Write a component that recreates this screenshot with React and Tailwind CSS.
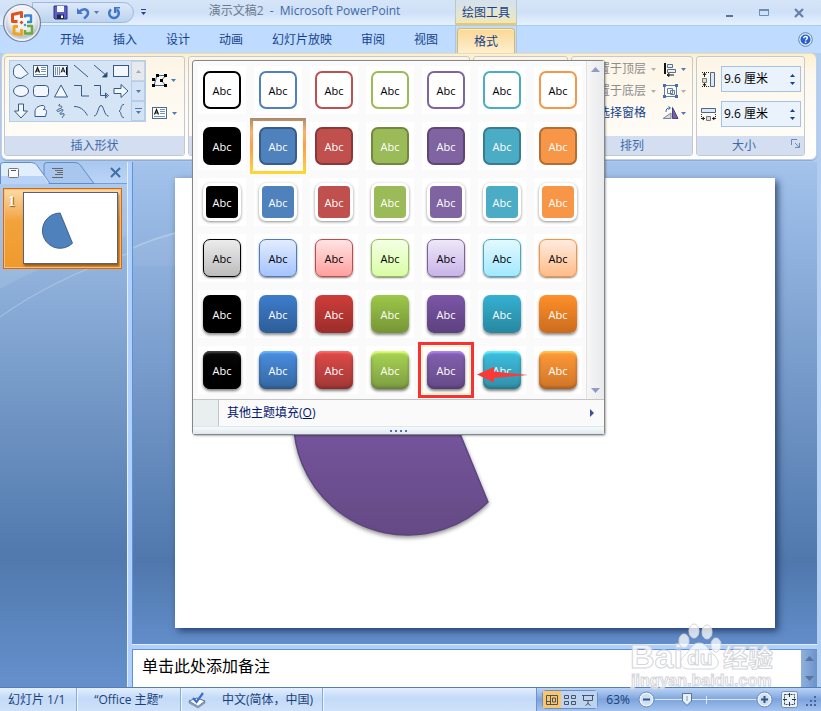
import React from 'react';
import clsx from 'clsx';

const TABS = ['开始', '插入', '设计', '动画', '幻灯片放映', '审阅', '视图'];

// One entry per gallery row; cells run black, blue, red, green, purple, teal, orange
const STYLE_ROWS = [
  {
    name: '彩色轮廓',
    base: 'border-2 bg-white text-black',
    cells: [
      'border-black', 'border-[#4f81bd]', 'border-[#c0504d]', 'border-[#9bbb59]',
      'border-[#8064a2]', 'border-[#4bacc6]', 'border-[#f79646]',
    ],
  },
  {
    name: '彩色填充',
    base: 'border-2 text-white',
    cells: [
      'border-black bg-black', 'border-[#385d8a] bg-[#4f81bd]', 'border-[#8c3836] bg-[#c0504d]',
      'border-[#71893f] bg-[#9bbb59]', 'border-[#5c4776] bg-[#8064a2]',
      'border-[#357d91] bg-[#4bacc6]', 'border-[#b66d31] bg-[#f79646]',
    ],
  },
  {
    name: '浅色轮廓',
    base: 'border-3 border-white text-white shadow-[0_1px_3px_rgba(0,0,0,0.45)]',
    cells: [
      'bg-black', 'bg-[#4f81bd]', 'bg-[#c0504d]', 'bg-[#9bbb59]',
      'bg-[#8064a2]', 'bg-[#4bacc6]', 'bg-[#f79646]',
    ],
  },
  {
    name: '细微效果',
    base: 'border bg-linear-to-b text-black shadow-[0_1px_2px_rgba(0,0,0,0.5)]',
    cells: [
      'border-black from-[#ececec] to-[#bcbcbc]', 'border-[#4a7ebb] from-[#e3ecff] to-[#a4c3ff]',
      'border-[#be4b48] from-[#ffe4e4] to-[#ffa09e]', 'border-[#98b954] from-[#f4ffe4] to-[#d9fda4]',
      'border-[#7d60a0] from-[#eee8f8] to-[#c8b3e8]', 'border-[#46aac5] from-[#e2f9ff] to-[#a0e9ff]',
      'border-[#f69240] from-[#ffebde] to-[#ffbc88]',
    ],
  },
  {
    name: '中等效果',
    base: 'bg-linear-to-b text-white shadow-[0_2px_3px_rgba(0,0,0,0.45)]',
    cells: [
      'from-black to-black', 'from-[#3e7dcd] to-[#2d5d98]', 'from-[#ce3d3a] to-[#9b2d2a]',
      'from-[#9dc849] to-[#769535]', 'from-[#7c56a8] to-[#5d417e]',
      'from-[#35b1d1] to-[#2787a0]', 'from-[#ff8f2a] to-[#cb6c1d]',
    ],
  },
  {
    name: '强烈效果',
    base: 'bg-linear-to-b text-white',
    cells: [
      'from-[#0a0a0a] to-black shadow-[inset_0_3px_2px_-1px_#444,inset_0_-2px_3px_#000,0_2px_3px_rgba(0,0,0,0.5)]',
      'from-[#4a8ee2] to-[#35679f] shadow-[inset_0_3px_2px_-1px_#6bb4ff,inset_0_-2px_3px_#2c5585,0_2px_3px_rgba(0,0,0,0.5)]',
      'from-[#e04a48] to-[#a03836] shadow-[inset_0_3px_2px_-1px_#ff6b68,inset_0_-2px_3px_#852c2a,0_2px_3px_rgba(0,0,0,0.5)]',
      'from-[#a9d552] to-[#7d9c42] shadow-[inset_0_3px_2px_-1px_#e2ff78,inset_0_-2px_3px_#657f32,0_2px_3px_rgba(0,0,0,0.5)]',
      'from-[#8460b2] to-[#654a86] shadow-[inset_0_3px_2px_-1px_#b585f2,inset_0_-2px_3px_#523a6e,0_2px_3px_rgba(0,0,0,0.5)]',
      'from-[#3dbfe0] to-[#318fa8] shadow-[inset_0_3px_2px_-1px_#62f2ff,inset_0_-2px_3px_#247488,0_2px_3px_rgba(0,0,0,0.5)]',
      'from-[#ff9a38] to-[#cf7528] shadow-[inset_0_3px_2px_-1px_#ffc84a,inset_0_-2px_3px_#a85c1c,0_2px_3px_rgba(0,0,0,0.5)]',
    ],
  },
];

const THEME_COLORS = ['黑色', '蓝色', '红色', '绿色', '紫色', '青色', '橙色'];

/* ── Small drawings ─────────────────────────────────────────────────────── */

const Caret = ({ className = 'fill-[#4b7ab5]' }) => (
  <svg width="5" height="3" viewBox="0 0 5 3" className={clsx('shrink-0', className)}>
    <path d="M0 0h5L2.5 3z" />
  </svg>
);

const TextBoxIcon = () => (
  <svg width="16" height="16" viewBox="0 0 16 16" fill="none">
    <rect x="0.5" y="2.5" width="14" height="11" fill="#fff" stroke="#4e6a8c" />
    <path d="M2.5 9.5 4.5 4.5l2 5M3.3 8h2.6" stroke="#111" strokeWidth="1.2" />
    <path d="M8 4.5h5M8 6.5h5M8 8.5h5M2 11.5h11" stroke="#6f94c6" />
  </svg>
);

const SHAPES = [
  ['饼形', <path d="M7 1.500C3 1.500 .5 4 .5 8a6.300 6.300 0 0 0 11 5.200c1-1 3-1.200 3.500-2.700z" />],
  ['文本框', null],
  ['竖排文本框', (
    <g>
      <rect x="0.5" y="2.5" width="14" height="11" />
      <path d="M2.500 4v8M4.500 4v8M6.500 4v8" stroke="#7d93b0" />
      <path d="m8 9.500 2-5 2 5M9 8h2.500M13.500 4v8" stroke="#111" fill="none" />
    </g>
  )],
  ['直线', <path d="M1 2 15 14" fill="none" />],
  ['箭头', <path d="M1 2 14 13M14 9.500V14H9.500z" fill="#1f3557" />],
  ['矩形', <rect x="0.5" y="2.5" width="15" height="11" />],
  ['椭圆', <ellipse cx="8" cy="8" rx="7.5" ry="5.5" />],
  ['圆角矩形', <rect x="0.5" y="2.5" width="15" height="11" rx="3" />],
  ['三角形', <path d="M8 2 14.500 14h-13z" />],
  ['肘形连接符', <path d="M1 2.500h7.500v10.500H16" fill="none" />],
  ['肘形箭头', <path d="M1 2.500h6.500v10H14M12.500 10l3 2.500-3 2.500z" fill="none" />],
  ['右箭头', <path d="M1 5.500h7V1.500L15 8l-7 6.500v-4H1z" />],
  ['下箭头', <path d="M5.500 1h5v7h4L8 15 1.500 8h4z" />],
  ['任意多边形', <path d="M2 13.500V9C2 5 5 3 9 2.500c4-.5 3 4 1 4 2 0 4 0 3.500 3l-1 4z" />],
  ['自由曲线', <path d="M7 1C3 4 9 2 9 4s-6 2-5 4 6-3 6-1-4 3-3 4 5-2 4 1-3 1-1 3" fill="none" />],
  ['弧形', <path d="M1 3.500c6 0 10 3 13.500 9" fill="none" />],
  ['曲线', <path d="M1 13C5 13 5 2.500 8 2.500s3 10.500 7.500 10.500" fill="none" />],
  ['左大括号', <path d="M11 1.500C7 1.500 9 7 6 8c3 1 1 6.500 5 6.500" fill="none" />],
];

const OfficeLogo = () => (
  <svg width="44" height="44" viewBox="0 0 44 44">
    <defs>
      <radialGradient id="orb" cx="50%" cy="35%" r="65%">
        <stop offset="0" stopColor="#fff" />
        <stop offset="0.55" stopColor="#e9edf3" />
        <stop offset="0.8" stopColor="#b9c2d0" />
        <stop offset="1" stopColor="#f5f8fc" />
      </radialGradient>
    </defs>
    <circle cx="22" cy="23" r="18.500" fill="url(#orb)" stroke="#76859c" strokeWidth="1.200" />
    <circle cx="22" cy="23" r="17" fill="none" stroke="#fff" opacity="0.8" />
    <g fill="none" strokeWidth="3" strokeLinejoin="round">
      <path d="M17.500 21.500H12.500v-7l9-2v5.500" stroke="#e3511b" />
      <path d="M25 17.500v-2h6v6.500h-4" stroke="#3c86cf" strokeWidth="2.400" />
      <path d="M18 26.500h-4v7l7.500 1V29" stroke="#f0a51c" />
      <path d="M27 26h5v7.500h-7V30" stroke="#6aac35" strokeWidth="2.400" />
    </g>
    <path d="m21.500 20.500 2 2-2 2-2-2z" fill="#e3511b" />
    <path d="m25 23.500 1.500 1.500-1.500 1.500-1.500-1.500z" fill="#3c86cf" />
  </svg>
);

/* Chord shape on the slide, used both on the canvas and in the thumbnail */
const ChordShape = ({ fill, stroke, id, shadow }) => (
  <svg viewBox="0 0 600 450" className="block w-full">
    <defs>
      <linearGradient id={id} x1="0" y1="0" x2="0" y2="1">
        <stop offset="0" stopColor={fill[0]} />
        <stop offset="1" stopColor={fill[1]} />
      </linearGradient>
    </defs>
    <path
      d="M233 129A114 114 0 1 0 313 324Z"
      fill={`url(#${id})`}
      stroke={stroke}
      strokeWidth={shadow ? 1.5 : 6}
      className={shadow ? 'drop-shadow-[0_2px_2px_rgba(0,0,0,0.45)]' : undefined}
    />
  </svg>
);

/* ── Title bar and tabs ─────────────────────────────────────────────────── */

const TitleBar = () => (
  <header className="flex h-[26px] border-b border-[#a5cdee] bg-linear-to-b from-[#d6e5f8] via-[#cfe0f7] to-[#e6f1ff] pl-8">
    <div className="flex w-[122px] items-center">
      <div className="flex h-[21px] items-center rounded-r-full border border-[#9db9dd] bg-linear-to-b from-[#dde9f9] to-[#bcd2ef] pr-3 pl-5">
        <button aria-label="保存">
          <svg width="15" height="15" viewBox="0 0 15 15">
            <path d="M1 1h13v13H2L1 13z" fill="#5a5fc4" stroke="#32357f" />
            <path d="M4 1h7v6H4z" fill="#f4f6ff" />
            <path d="M4 9.500h7V14H4z" fill="#23264f" />
            <path d="M8 10.500h2V13H8z" fill="#fff" />
          </svg>
        </button>
        <button aria-label="撤消" className="ml-2 flex items-center gap-1">
          <svg width="14" height="14" viewBox="0 0 14 14" fill="none" stroke="#4676c8" strokeWidth="2.500">
            <path d="M3.500 5.500C8 1.500 12 3.500 12 7c0 2.500-2 4-4 5.500" />
            <path d="M1 2v6h6z" fill="#4676c8" stroke="none" />
          </svg>
          <Caret />
        </button>
        <button aria-label="恢复" className="ml-2">
          <svg width="14" height="14" viewBox="0 0 14 14" fill="none" stroke="#3f74c9" strokeWidth="2.500">
            <path d="M4 3.500a4.800 4.800 0 1 0 6 0" />
            <path d="M7 1h6v1.500H9.500V7H7z" fill="#3f74c9" stroke="none" />
          </svg>
        </button>
      </div>
      <button aria-label="自定义快速访问工具栏" className="ml-1.5">
        <svg width="7" height="7" viewBox="0 0 7 7" fill="#234a86">
          <path d="M1 0h5v1H1zM1 3h5L3.500 6z" />
        </svg>
      </button>
    </div>
    <h1 className="w-[301px] text-center text-xs leading-[22px] text-[#3e6aaa]">
      <span className="text-[#6c7a8e]">演示文稿2</span>&nbsp; - &nbsp;Microsoft PowerPoint
    </h1>
    <div className="w-[62px] border-x border-b-2 border-[#b9c9c9] border-b-[#efc75c] bg-linear-to-b from-[#d3e2f0] to-[#f1e6b8] text-center text-xs leading-[25px] text-[#15428b]">
      绘图工具
    </div>
    <div className="ml-auto flex items-center gap-[23px] pr-4">
      <button aria-label="最小化">
        <svg width="12" height="12" viewBox="0 0 12 12"><path d="M3 8h7v2H3z" fill="#5c7493" /></svg>
      </button>
      <button aria-label="向下还原">
        <svg width="12" height="12" viewBox="0 0 12 12" fill="none" stroke="#6d8db5">
          <path d="M1.500 2.500h9v6h-9z" /><path d="M1 3h10" strokeWidth="2" />
        </svg>
      </button>
      <button aria-label="关闭">
        <svg width="12" height="12" viewBox="0 0 12 12"><path d="m2 2 8 8M10 2l-8 8" stroke="#6580a5" strokeWidth="2.200" /></svg>
      </button>
    </div>
  </header>
);

const TabRow = () => (
  <nav className="flex h-[27px] bg-[#bfdbff] pl-[60px] text-xs text-[#15428b]">
    <div className="flex gap-[29px]">
      {TABS.map((tab) => (
        <button key={tab} className="leading-7">{tab}</button>
      ))}
    </div>
    <div className="ml-[17px] flex w-[62px] justify-center border-x border-[#a9c6e4] pt-0.5">
      <button className="w-[58px] rounded-t border border-b-0 border-[#e0b65c] bg-linear-to-b from-[#fbd795] to-[#fdf0cd] leading-[23px] shadow-[inset_0_1px_0_#fff3d0]">
        格式
      </button>
    </div>
    <button aria-label="帮助" className="mr-2 ml-auto">
      <svg width="15" height="15" viewBox="0 0 15 15">
        <circle cx="7.500" cy="7.500" r="6.800" fill="#e6f0fc" stroke="#5c83b8" />
        <circle cx="7.500" cy="7.500" r="5" fill="#2a62cc" />
        <path d="M5.700 6.300c0-2.500 3.800-2.300 3.700-.2-.1 1.200-1.800 1.200-1.800 2.500M7.600 9.500v1.500" fill="none" stroke="#fff" strokeWidth="1.400" />
      </svg>
    </button>
  </nav>
);

/* ── Ribbon ─────────────────────────────────────────────────────────────── */

const RibbonGroup = ({ label, className, children, launcher }) => (
  <section className={clsx('flex flex-col rounded-[3px] border border-[#c5c9cf] bg-linear-to-b from-[#fdf5e6] to-[#fffefc]', className)}>
    <div className="flex-1">{children}</div>
    <div className="flex h-[19px] items-center bg-[#d3dff0] text-xs text-[#3e6aaa]">
      {label && <h2 className="flex-1 text-center">{label}</h2>}
      {launcher && (
        <button aria-label="大小和位置" className="mr-1 mb-1">
          <svg width="9" height="9" viewBox="0 0 9 9" fill="none" stroke="#6a8bb8">
            <path d="M.5 6V.5H6M4 4l4 4M8.500 4v4.500H4" />
          </svg>
        </button>
      )}
    </div>
  </section>
);

const ShapesGroup = () => (
  <RibbonGroup label="插入形状" className="w-[181px]">
    <div className="flex px-1 pt-[3px]">
      <div className="flex border border-[#b4cde9] bg-[#d5e5f6]">
        <div className="grid grid-cols-6 pl-px">
          {SHAPES.map(([name, drawing]) => (
            <button key={name} aria-label={name} className="flex size-5 items-center justify-center">
              {drawing ? (
                <svg width="16" height="16" viewBox="0 0 16 16" fill="#f1f7fd" stroke="#365a85">{drawing}</svg>
              ) : (
                <TextBoxIcon />
              )}
            </button>
          ))}
        </div>
        <div className="flex w-[14px] flex-col">
          <button aria-label="上一行" className="flex flex-1 items-center justify-center border border-[#c9d1da] bg-[#e6e9ed]">
            <Caret className="rotate-180 fill-[#a3a9b0]" />
          </button>
          <button aria-label="下一行" className="flex flex-1 items-center justify-center border border-[#b4cde9] bg-[#d3e3f5]">
            <Caret />
          </button>
          <button aria-label="更多形状" className="flex flex-1 flex-col items-center justify-center gap-0.5 border border-[#b4cde9] bg-[#d3e3f5]">
            <span className="h-px w-[7px] bg-[#4b7ab5]" />
            <Caret />
          </button>
        </div>
      </div>
      <div className="ml-1.5 flex flex-col gap-4 pt-3">
        <button aria-label="编辑形状" className="flex items-center gap-0.5">
          <svg width="17" height="17" viewBox="0 0 17 17">
            <path d="M2 13.500 5 3.500h9l-5 5 5 5z" fill="none" stroke="#3a66a5" />
            <path d="M0 12h3v3H0zM0 6h3v3H0zM4 2h3v3H4zM12 2h3v3h-3zM8 7h3v3H8zM12 12h3v3h-3z" />
          </svg>
          <Caret />
        </button>
        <button aria-label="文本框" className="flex items-center gap-1">
          <TextBoxIcon />
          <Caret />
        </button>
      </div>
    </div>
  </RibbonGroup>
);

const ArrangeGroup = () => (
  <RibbonGroup label="排列" className="w-[122px]">
    <div className="flex justify-end pt-px pr-1.5 text-xs leading-[22px]">
      <div className="flex flex-col items-start">
        <button disabled className="flex items-center gap-[5px] text-[#8d8d8d]">
          置于顶层 <Caret className="fill-[#b0b0b0]" />
        </button>
        <button disabled className="flex items-center gap-[5px] text-[#8d8d8d]">
          置于底层 <Caret className="fill-[#b0b0b0]" />
        </button>
        <button className="text-[#15428b]">选择窗格</button>
      </div>
      <div className="ml-1.5 flex flex-col">
        <button aria-label="对齐" className="flex h-[22px] items-center gap-0.5">
          <svg width="17" height="16" viewBox="0 0 17 16" fill="none">
            <path d="M3 2v11" stroke="#111" strokeWidth="2" />
            <path d="M5.500 3.500h5v3h-5zM5.500 8.500h8v3h-8z" fill="#e9f0f8" stroke="#5a6f8c" />
            <path d="M5 14h7M5 14l2-1.500v3z" stroke="#111" />
          </svg>
          <Caret />
        </button>
        <button aria-label="组合" disabled className="flex h-[22px] items-center gap-0.5">
          <svg width="17" height="16" viewBox="0 0 17 16" fill="none" stroke="#5b7fb0">
            <path d="M2.500 2.500h12v11h-12zM5.500 5.500h5v5h-5zM8.500 7.500h4v4h-4z" />
            <path d="M1 1h3v3H1zM13 1h3v3h-3zM1 12h3v3H1zM13 12h3v3h-3z" fill="#4a6fa3" stroke="none" />
          </svg>
          <Caret className="fill-[#b0b0b0]" />
        </button>
        <button aria-label="旋转" className="flex h-[22px] items-center gap-0.5">
          <svg width="17" height="16" viewBox="0 0 17 16">
            <path d="M1 13.500h8V8z" fill="#d5dbe2" stroke="#7c8794" />
            <path d="M10.500 2.500v11H16z" fill="#7560a8" stroke="#4e3f80" />
            <path d="M4 7c0-3 1-4 4-4M6.500 1.500 8.500 3l-2 1.500" fill="none" stroke="#3465b0" />
          </svg>
          <Caret />
        </button>
      </div>
    </div>
  </RibbonGroup>
);

const SizeField = ({ id, label, icon }) => (
  <div className="flex items-center gap-1">
    <label htmlFor={id} aria-label={label}>{icon}</label>
    <div className="flex h-[26px] flex-1 border border-[#a6c3e6] bg-[#eaf2fb]">
      <input id={id} defaultValue="9.6 厘米" className="w-0 flex-1 pl-0.5 text-xs text-black outline-none" />
      <div className="flex w-4 flex-col items-center justify-around py-1">
        <button aria-label={`${label}增加`}><Caret className="rotate-180 fill-[#15428b]" /></button>
        <button aria-label={`${label}减少`}><Caret className="fill-[#15428b]" /></button>
      </div>
    </div>
  </div>
);

const SizeGroup = () => (
  <RibbonGroup label="大小" className="w-[109px]" launcher>
    <div className="flex flex-col gap-[9px] px-[3px] pt-[9px]">
      <SizeField
        id="shape-height"
        label="形状高度"
        icon={
          <svg width="17" height="17" viewBox="0 0 17 17" fill="none">
            <path d="M10.500 1.500h4v14h-4z" fill="#dde8f5" stroke="#4c6688" />
            <path d="M2 1.500h7M2 15.500h7" stroke="#222" strokeDasharray="1 1" />
            <path d="M2.500 7.500h4v4h-4z" fill="#ddd" stroke="#777" />
            <path d="M4.500 2v4M4.500 12v3M3 4l1.500-2L6 4M3 13l1.500 2L6 13" stroke="#222" />
          </svg>
        }
      />
      <SizeField
        id="shape-width"
        label="形状宽度"
        icon={
          <svg width="17" height="17" viewBox="0 0 17 17" fill="none">
            <path d="M1.500 2.500h14v4h-14z" fill="#dde8f5" stroke="#4c6688" />
            <path d="M1.500 8v6M15.500 8v6" stroke="#222" strokeDasharray="1 1" />
            <path d="M6.500 10.500h4v4h-4z" fill="#ddd" stroke="#777" />
            <path d="M2 12.500h3M12 12.500h3M4 11l-2 1.500L4 14M13 11l2 1.500-2 1.500" stroke="#222" />
          </svg>
        }
      />
    </div>
  </RibbonGroup>
);

/* ── Shape style gallery (drops over the slide) ─────────────────────────── */

const StyleCell = ({ row, cell, current, chosen, label }) => (
  <button
    aria-label={label}
    className={clsx(
      'relative flex size-12 items-center justify-center bg-white',
      current &&
        'before:absolute before:-inset-1 before:border-3 before:[border-image:linear-gradient(#a98a6c,#f9b468_25%,#f9a04a_50%,#fdd835)_3]',
      chosen && 'outline-3 outline-offset-1 outline-[#f9322f] shadow-[inset_0_0_0_1px_#fdf3b8]',
    )}
  >
    <span className={clsx('flex size-[38px] items-center justify-center rounded-[7px] text-[11px] leading-none', row.base, cell)}>
      Abc
    </span>
  </button>
);

const StyleGallery = () => (
  <div className="absolute top-1 left-1 z-20 w-[413px] rounded-[3px] border border-[#868686] bg-[#fafafa] shadow-[1px_1px_2px_rgba(0,0,0,0.3)]">
    <div className="flex border-b border-[#c5c5c5]">
      <div className="relative grid flex-1 grid-cols-[repeat(7,48px)] gap-2 pt-[5px] pb-[5px] pl-[5px]">
        {STYLE_ROWS.map((row, r) =>
          row.cells.map((cell, c) => (
            <StyleCell
              key={`${r}-${c}`}
              row={row}
              cell={cell}
              current={r === 1 && c === 1}
              chosen={r === 5 && c === 4}
              label={`${row.name} ${THEME_COLORS[c]}`}
            />
          )),
        )}
        {/* Pointer arrow */}
        <svg width="52" height="18" viewBox="0 0 52 18" className="absolute right-[57px] bottom-[15px]">
          <path d="M0 8.500 17 1v4.500L51 9l-34 3v4.500z" fill="#f93a37" />
        </svg>
      </div>
      <div className="flex w-[18px] flex-col items-center justify-between border-l border-[#e2e2e2] bg-linear-to-r from-[#f6f6f6] to-[#e9eaec] py-1.5">
        <button aria-label="向上滚动">
          <svg width="9" height="5" viewBox="0 0 9 5"><path d="M0 5h9L4.500 0z" fill="#8f9dc4" /></svg>
        </button>
        <button aria-label="向下滚动">
          <svg width="9" height="5" viewBox="0 0 9 5"><path d="M0 0h9L4.500 5z" fill="#8f9dc4" /></svg>
        </button>
      </div>
    </div>
    <button className="flex h-[26px] w-full items-center text-xs text-[#00156e]">
      <span className="h-full w-[26px] border-r border-[#c5c5c5] bg-[#e9eeee]" />
      <span className="ml-2">其他主题填充(<u>O</u>)</span>
      <svg width="5" height="8" viewBox="0 0 5 8" className="mr-[9px] ml-auto"><path d="M0 0v8l4-4z" fill="#3b539c" /></svg>
    </button>
    <div className="flex h-2 items-center justify-center gap-[3px] border-t border-[#dce6ee] bg-linear-to-b from-[#f8fafc] to-[#dfe9ef]">
      {[0, 1, 2, 3].map((dot) => (
        <span key={dot} className="size-0.5 bg-[#5471a8]" />
      ))}
    </div>
  </div>
);

const Ribbon = () => (
  <div className="mr-1 ml-px flex h-[107px] gap-[3px] rounded-md border border-[#c2cfdf] border-t-[#e8dcb8] bg-linear-to-b from-[#fdf0cd] via-[#fdf8ee] via-20% to-white pt-0.5 pr-[11px] pb-[3px] pl-0.5 shadow-[0_1px_1px_#8aa8d0]">
    <ShapesGroup />
    <div className="relative flex flex-1">
      <RibbonGroup className="flex-1" />
      <StyleGallery />
    </div>
    <RibbonGroup className="w-[95px]" />
    <ArrangeGroup />
    <SizeGroup />
  </div>
);

/* ── Slides panel, canvas, notes ────────────────────────────────────────── */

const SlidesPanel = () => (
  <aside className="relative w-[127px] overflow-hidden bg-linear-to-b from-[#a9c8ee] via-[#5179ad] via-75% to-[#6590cd]">
    <svg viewBox="0 0 127 160" className="absolute top-0 left-0 w-full" fill="none">
      <path d="M0 127C40 105 90 85 127 74V0H0z" fill="#fff" opacity="0.1" />
      <path d="M0 155C35 130 80 108 127 92" stroke="#fff" strokeWidth="1.500" opacity="0.2" />
    </svg>
    <div className="relative flex h-[22px] justify-end border-b border-[#6f9fdc] bg-linear-to-b from-[#a9c8f0] to-[#bcd4f5]">
      <svg width="96" height="22" viewBox="0 0 96 22" className="absolute top-0 left-0">
        <path d="M44 21.500V3q0-2.500 3-2.500h28q4 0 6 3.500l13 17.500z" fill="#a9c6ef" stroke="#5c8ecb" />
        <path d="M.5 22V3q0-2.500 3-2.500h28q4 0 6 3.500L50 21.500z" fill="#e3eefd" stroke="#5c8ecb" />
        <path d="M1 14h42l6 8H1z" fill="#b9d3f8" />
        <rect x="8.500" y="6.500" width="10" height="9" rx="1" fill="#fff" stroke="#777" />
        <path d="M11 8.500h5" stroke="#555" />
        <path d="M52 6.500h11M55 8.500h8M57 10.500h6M55 12.500h8M52 15.500h11" stroke="#666" />
      </svg>
      <button aria-label="关闭窗格" className="mr-1.5">
        <svg width="11" height="11" viewBox="0 0 11 11"><path d="m1 1 9 9M10 1l-9 9" stroke="#3f6ea8" strokeWidth="2" /></svg>
      </button>
    </div>
    <button
      aria-label="幻灯片 1"
      className="relative mt-1 ml-[3px] flex w-[119px] gap-2 border border-[#e0660c] bg-linear-to-b from-[#fbdba6] via-[#f2a33c] via-40% to-[#f0992c] p-[3px] pb-1 shadow-[inset_0_0_0_1px_#f8c27a]"
    >
      <span className="pl-px font-['Liberation_Serif',serif] text-sm leading-5 font-bold text-white [text-shadow:1px_1px_1px_#7a5a20]">1</span>
      <span className="flex-1 border border-[#5d5f7a] bg-white shadow-[1px_2px_2px_rgba(0,0,0,0.4)]">
        <ChordShape id="thumb-fill" fill={['#4f81bd', '#4f81bd']} stroke="#385d8a" />
      </span>
    </button>
  </aside>
);

const Canvas = () => (
  <div className="relative flex-1 border-l border-[#5f93d8] bg-linear-to-b from-[#a3c3ec] via-[#5078ad] via-83% to-[#628dc9] px-[42px] py-4">
    <svg viewBox="0 0 43 60" width="43" height="60" className="absolute top-11 left-0" fill="none">
      <path d="M0 40c15-7 28-11 43-15v35H0z" fill="#fff" opacity="0.06" />
      <path d="M0 42c15-7 28-11 43-15" stroke="#fff" strokeWidth="1.500" opacity="0.25" />
    </svg>
    <div className="bg-white shadow-[3px_3px_7px_rgba(20,40,80,0.75)]">
      <ChordShape id="slide-fill" fill={['#8960b6', '#644a85']} stroke="#5d4480" shadow />
    </div>
  </div>
);

const Notes = () => (
  <div className="flex h-[43px] flex-col border-t border-[#e4effd] bg-[#b0d0fb] pt-1">
    <div className="flex min-h-0 flex-1 border-t border-l border-[#5f93d8]">
      <textarea
        aria-label="备注"
        rows={1}
        defaultValue="单击此处添加备注"
        className="w-0 flex-1 resize-none overflow-hidden bg-white px-[9px] pt-1 text-base leading-6 text-black outline-none"
      />
      <div className="flex w-4 flex-col items-center justify-between bg-linear-to-r from-[#8fb0dc] to-[#6b93cb] py-1.5">
        <svg width="9" height="5" viewBox="0 0 9 5"><path d="M0 5h9L4.500 0z" fill="#59749f" /></svg>
        <svg width="9" height="5" viewBox="0 0 9 5"><path d="M0 0h9L4.500 5z" fill="#59749f" /></svg>
      </div>
    </div>
  </div>
);

const Watermark = () => (
  <svg
    width="150"
    height="72"
    viewBox="0 0 150 72"
    className="pointer-events-none absolute right-[42px] bottom-[-5px] z-10"
    fill="#fff"
    fillOpacity="0.75"
    stroke="#d3d5da"
    strokeWidth="1"
  >
    <g className="font-['Liberation_Sans','Noto_Sans_CJK_SC',sans-serif] font-bold">
      <text x="1" y="48" fontSize="34">Bai</text>
      <text x="94" y="47" fontSize="25">经验</text>
      <text x="2" y="66" fontSize="16">jingyan.baidu.com</text>
    </g>
    <ellipse cx="55" cy="21" rx="5" ry="7" />
    <ellipse cx="65" cy="11" rx="5" ry="7" />
    <ellipse cx="78" cy="12" rx="5" ry="7" />
    <ellipse cx="87" cy="25" rx="5" ry="7" />
    <path d="M70 23c-7 0-9 8-14 12-7 6-5 14 4 14h21c9 0 11-8 4-14-6-4-7-12-15-12z" />
    <text x="58" y="45" fontSize="21" className="font-['Liberation_Sans',sans-serif] font-bold">du</text>
  </svg>
);

/* ── Status bar ─────────────────────────────────────────────────────────── */

const StatusCell = ({ className, children }) => (
  <div className={clsx('flex items-center border-r border-[#86abdd] shadow-[1px_0_0_#eef5ff]', className)}>{children}</div>
);

const VIEWS = [
  ['普通视图', <path d="M1.500 1.500h11v9h-11zM5.500 1.500v9M1.500 7.500h4M7.500 4h3v4h-3z" />],
  ['幻灯片浏览', <path d="M1.500 1.500h4v3h-4zM8.500 1.500h4v3h-4zM1.500 7.500h4v3h-4zM8.500 7.500h4v3h-4z" />],
  ['幻灯片放映视图', <path d="M1 1.500h12M2.500 1.500v5h9v-5M7 7v3M4.500 11.500 7 9.500l2.500 2" />],
];

const ZoomButton = ({ label, d }) => (
  <button aria-label={label}>
    <svg width="17" height="17" viewBox="0 0 17 17">
      <circle cx="8.500" cy="8.500" r="7.500" fill="#e9f2fd" stroke="#6b8cba" />
      <circle cx="8.500" cy="8.500" r="5.500" fill="#cfdff3" />
      <path d={d} stroke="#33557f" strokeWidth="2" />
    </svg>
  </button>
);

const StatusBar = () => (
  <footer className="flex h-6 border-t border-[#567db1] bg-linear-to-b from-[#e3effd] via-[#c3daf8] via-45% to-[#cfe1fa] text-xs text-[#1a3f7c]">
    <StatusCell className="w-[77px] pl-2">幻灯片 1/1</StatusCell>
    <StatusCell className="w-[104px] justify-center">“Office 主题”</StatusCell>
    <StatusCell className="w-[142px] gap-4 pl-[7px]">
      <svg width="18" height="18" viewBox="0 0 18 18">
        <path d="M1 10l8-3 8 3-7 6z" fill="#fff" stroke="#5f6f8c" />
        <path d="M1 10v2l9 5 7-5v-2l-7 5z" fill="#8da2c4" stroke="#5f6f8c" strokeWidth="0.500" />
        <path d="m5 7 3.500 4L15 2" fill="none" stroke="#3a6fd0" strokeWidth="2.200" />
      </svg>
      中文(简体，中国)
    </StatusCell>
    <div className="ml-auto flex items-center border-l border-[#6f93c7] bg-linear-to-b from-[#b9d3f6] via-[#7ea4dd] via-50% to-[#a3c2ee] pr-1 pl-[5px]">
      <div className="flex rounded-sm border border-[#6d8fc2]">
        {VIEWS.map(([name, drawing], i) => (
          <button
            key={name}
            aria-label={name}
            className={clsx('flex h-[17px] w-[18px] items-center justify-center', i === 0 ? 'bg-[#fbc667]' : 'bg-[#bcd3f2]')}
          >
            <svg width="14" height="12" viewBox="0 0 14 12" fill="none" stroke="#4a5362">{drawing}</svg>
          </button>
        ))}
      </div>
      <button className="mr-2 ml-2">63%</button>
      <ZoomButton label="缩小" d="M5 8.500h7" />
      <div className="relative h-5 w-[101px]">
        <svg width="101" height="20" viewBox="0 0 101 20">
          <path d="M0 9.500h101M51.500 6v8" stroke="#dce9fb" />
          <path d="M27.500 3.500h9V11L32 15.500 27.500 11z" fill="#e8f1fc" stroke="#55779f" />
          <path d="M32 6v5" stroke="#7b98c0" />
        </svg>
        <input type="range" aria-label="显示比例" min="10" max="400" defaultValue="63" className="absolute inset-0 w-full opacity-0" />
      </div>
      <ZoomButton label="放大" d="M5 8.500h7M8.500 5v7" />
      <button aria-label="适应窗口" className="ml-2">
        <svg width="17" height="17" viewBox="0 0 17 17" fill="none">
          <rect x="0.500" y="0.500" width="16" height="16" rx="2" fill="#e9f1fb" stroke="#6d8fc2" />
          <path d="M3.500 3.500h10v10h-10z" stroke="#444" strokeDasharray="2 1" />
          <path d="M8.500 2v4M8.500 11v4M2 8.500h4M11 8.500h4" stroke="#333" />
        </svg>
      </button>
      <svg width="12" height="12" viewBox="0 0 12 12" fill="#47689b" className="mt-1 ml-[7px]">
        <path d="M9 0h2v2H9zM5 4h2v2H5zM9 4h2v2H9zM1 8h2v2H1zM5 8h2v2H5zM9 8h2v2H9z" />
      </svg>
    </div>
  </footer>
);

const App = () => (
  <div className="relative flex min-h-screen flex-col bg-[#b2cdf2] font-['Open_Sans','Noto_Sans_CJK_SC',sans-serif]">
    <TitleBar />
    <TabRow />
    <button aria-label="Office 按钮" className="absolute top-0 left-0 z-10">
      <OfficeLogo />
    </button>
    <Ribbon />
    <main className="relative mt-0.5 flex flex-1 pr-1">
      <SlidesPanel />
      <div className="w-[5px] border-l border-[#e4effd] bg-[#b0d0fb]" />
      <div className="flex flex-1 flex-col">
        <Canvas />
        <Notes />
      </div>
      <Watermark />
    </main>
    <StatusBar />
  </div>
);

export default App;
